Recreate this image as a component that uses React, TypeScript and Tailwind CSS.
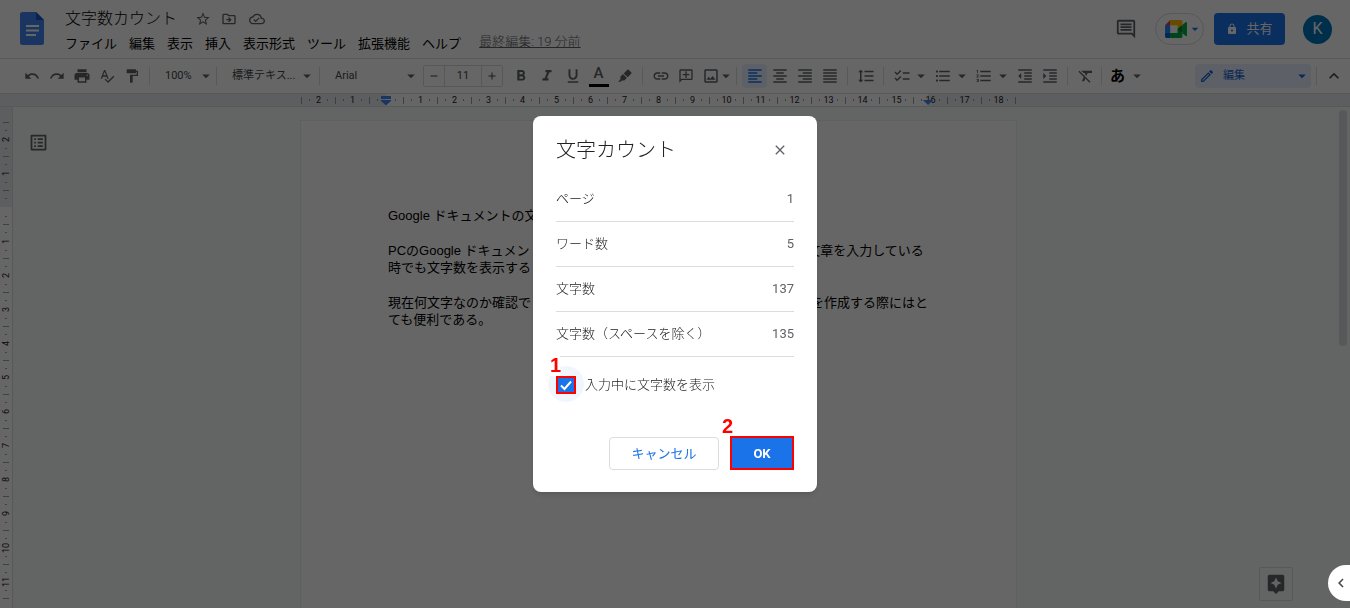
import React, { useState } from "react";
import clsx from "clsx";
import {
    MdStarBorder,
    MdOutlineDriveFileMove,
    MdOutlineCloudDone,
    MdUndo,
    MdRedo,
    MdPrint,
    MdSpellcheck,
    MdFormatPaint,
    MdArrowDropDown,
    MdRemove,
    MdAdd,
    MdFormatBold,
    MdFormatItalic,
    MdFormatUnderlined,
    MdLink,
    MdOutlineAddComment,
    MdOutlineImage,
    MdFormatAlignLeft,
    MdFormatAlignCenter,
    MdFormatAlignRight,
    MdFormatAlignJustify,
    MdFormatLineSpacing,
    MdChecklist,
    MdFormatListBulleted,
    MdFormatListNumbered,
    MdFormatIndentDecrease,
    MdFormatIndentIncrease,
    MdFormatClear,
    MdOutlineEdit,
    MdExpandLess,
    MdOutlineComment,
    MdLock,
    MdOutlineListAlt,
    MdAssistant,
    MdChevronLeft,
    MdClose,
} from "react-icons/md";

const menus = ["ファイル", "編集", "表示", "挿入", "表示形式", "ツール", "拡張機能", "ヘルプ"];

const counts = [
    { label: "ページ", value: 1 },
    { label: "ワード数", value: 5 },
    { label: "文字数", value: 137 },
    { label: "文字数（スペースを除く）", value: 135 },
];

// centimetres, negative values are the margins
const horizontalMarks = Array.from({ length: 21 }, (_, i) => i - 2);
const verticalMarks = Array.from({ length: 14 }, (_, i) => i - 2);

const DocsLogo = () => (
    <svg className="w-6 h-[33px]" viewBox="0 0 24 33">
        <path fill="#4285f4" d="M2.5 0H16l8 8v22.5a2.5 2.5 0 0 1-2.5 2.5h-19A2.5 2.5 0 0 1 0 30.500V2.500A2.500 2.500 0 0 1 2.500 0z" />
        <path fill="#1a56c4" d="M16 0l8 8h-8z" />
        <path fill="#fff" d="M6 13h13v2H6zM6 17.500h13v2H6zM6 22h10v2H6z" />
    </svg>
);

const MeetLogo = () => (
    <svg className="w-[22px] h-[18px] shrink-0" viewBox="0 0 87.5 72">
        <path fill="#00832d" d="M49.5 36l8.53 9.75 11.47 7.33 2-17.02-2-16.64-11.69 6.44z" />
        <path fill="#0066da" d="M0 51.5V66c0 3.315 2.685 6 6 6h14.5l3-10.96-3-9.54-9.95-3z" />
        <path fill="#e94235" d="M20.5 0L0 20.5l10.55 3 9.95-3 2.95-9.41z" />
        <path fill="#2684fc" d="M20.5 20.5H0v31h20.5z" />
        <path fill="#00ac47" d="M82.6 8.68L69.5 19.42v33.66l13.16 10.79c1.97 1.54 4.85.135 4.85-2.37V11c0-2.535-2.945-3.925-4.91-2.32zM49.5 36v15.5h-29V72h43c3.315 0 6-2.685 6-6V53.08z" />
        <path fill="#ffba00" d="M63.5 0h-43v20.5h29V36l20-16.57V6c0-3.315-2.685-6-6-6z" />
    </svg>
);

const Highlighter = () => (
    <svg className="w-4 h-4" viewBox="0 0 16 16" fill="currentColor">
        <path d="M10.300 1.800a1 1 0 0 1 1.400 0l2.500 2.500a1 1 0 0 1 0 1.400L10.600 9.300 6.700 5.400z" />
        <path d="M6 6.100l3.900 3.900-2.600 2.600H4.800L3.700 13.700H1.200l2.200-2.400V8.700z" />
    </svg>
);

type ToolProps = {
    label: string;
    active?: boolean;
    children: React.ReactNode;
};

const Tool = ({ label, active, children }: ToolProps) => (
    <button
        aria-label={label}
        className={clsx(
            "w-[25px] h-6 shrink-0 flex items-center justify-center rounded-sm",
            active ? "bg-[#e8f0fe] text-[#1a73e8]" : "text-[#5f6368]"
        )}
    >
        {children}
    </button>
);

const Caret = ({ label }: { label: string }) => (
    <button aria-label={label} className="w-3.5 h-6 shrink-0 flex items-center justify-center text-[#5f6368]">
        <MdArrowDropDown className="w-[18px] h-[18px] shrink-0" />
    </button>
);

const Separator = () => <div className="w-px h-[18px] mx-[5px] shrink-0 bg-[#dadce0]" />;

const Header = () => (
    <header className="h-[58px] flex items-start bg-white pl-5 pr-[18px]">
        <a href="#home" aria-label="ドキュメント ホーム" className="mt-3 shrink-0">
            <DocsLogo />
        </a>
        <div className="ml-[21px] flex flex-col">
            <div className="flex items-center h-[38px] text-[#5f6368]">
                <h1 className="text-base font-light text-black">文字数カウント</h1>
                <button aria-label="スター" className="ml-[18px]"><MdStarBorder className="w-4 h-4" /></button>
                <button aria-label="移動" className="ml-2.5"><MdOutlineDriveFileMove className="w-4 h-4" /></button>
                <button aria-label="保存状況" className="ml-3"><MdOutlineCloudDone className="w-4 h-4" /></button>
            </div>
            <nav className="flex items-center h-3 gap-3 text-[13px] text-black whitespace-nowrap">
                {menus.map((menu) => (
                    <button key={menu}>{menu}</button>
                ))}
                <a href="#history" className="ml-1.5 -mt-1 font-light text-[#5f6368] underline">最終編集: 19 分前</a>
            </nav>
        </div>
        <div className="ml-auto mt-[13px] flex items-center">
            <button aria-label="コメント履歴" className="text-[#5f6368]"><MdOutlineComment className="w-[22px] h-[22px]" /></button>
            <button aria-label="ビデオ会議" className="ml-[18px] w-[49px] h-8 flex items-center justify-center rounded-full border border-[#dadce0] text-[#1a73e8]">
                <MeetLogo />
                <MdArrowDropDown className="w-4 h-4 -mr-2" />
            </button>
            <button className="ml-2.5 w-[71px] h-8 flex items-center justify-center gap-2 rounded bg-[#1a73e8] text-white text-[13px]">
                <MdLock className="w-3 h-3" />
                共有
            </button>
            <button aria-label="アカウント" className="ml-[18px] w-[29px] h-[29px] rounded-full bg-[#0277bd] text-white text-base">K</button>
        </div>
    </header>
);

const Toolbar = () => (
    <div className="h-9 shrink-0 flex items-center border-y border-[#dadce0] bg-white pl-[19px] pr-1 text-[11px] text-[#444746]">
        <Tool label="元に戻す"><MdUndo className="w-4 h-4" /></Tool>
        <Tool label="やり直し"><MdRedo className="w-4 h-4" /></Tool>
        <Tool label="印刷"><MdPrint className="w-[18px] h-[18px]" /></Tool>
        <Tool label="スペルチェック"><MdSpellcheck className="w-4 h-4" /></Tool>
        <Tool label="書式を貼り付け"><MdFormatPaint className="w-4 h-4" /></Tool>
        <Separator />
        <button className="w-14 pl-2.5 shrink-0 flex items-center justify-between">
            100%
            <MdArrowDropDown className="w-[18px] h-[18px] -mr-1 shrink-0 text-[#5f6368]" />
        </button>
        <Separator />
        <button className="w-[92px] pl-2.5 shrink-0 flex items-center justify-between whitespace-nowrap">
            標準テキス...
            <MdArrowDropDown className="w-[18px] h-[18px] -mr-0.5 shrink-0 text-[#5f6368]" />
        </button>
        <Separator />
        <button className="w-[93px] pl-2.5 shrink-0 flex items-center justify-between">
            Arial
            <MdArrowDropDown className="w-[18px] h-[18px] -mr-0.5 shrink-0 text-[#5f6368]" />
        </button>
        <div className="mx-[5px] w-20 h-[22px] shrink-0 flex items-stretch border border-[#dadce0] rounded-xs">
            <button aria-label="フォントサイズを縮小" className="w-5 shrink-0 flex items-center justify-center"><MdRemove className="w-3 h-3" /></button>
            <input
                aria-label="フォントサイズ"
                defaultValue="11"
                className="min-w-0 flex-1 border-x border-[#dadce0] text-center"
            />
            <button aria-label="フォントサイズを拡大" className="w-5 shrink-0 flex items-center justify-center"><MdAdd className="w-3 h-3" /></button>
        </div>
        <div className="flex gap-px">
            <Tool label="太字"><MdFormatBold className="w-[18px] h-[18px]" /></Tool>
            <Tool label="斜体"><MdFormatItalic className="w-[18px] h-[18px]" /></Tool>
            <Tool label="下線"><MdFormatUnderlined className="w-[18px] h-[18px]" /></Tool>
            <Tool label="テキストの色">
                <span className="w-5 h-[22px] border-b-3 border-black text-[15px] leading-4 font-medium">A</span>
            </Tool>
            <Tool label="ハイライトの色"><Highlighter /></Tool>
        </div>
        <Separator />
        <Tool label="リンクを挿入"><MdLink className="w-[18px] h-[18px]" /></Tool>
        <Tool label="コメントを追加"><MdOutlineAddComment className="w-4 h-4 -scale-x-100" /></Tool>
        <Tool label="画像を挿入"><MdOutlineImage className="w-[18px] h-[18px]" /></Tool>
        <div className="-ml-1 -mr-0.5">
            <Caret label="画像オプション" />
        </div>
        <Separator />
        <Tool label="左揃え" active><MdFormatAlignLeft className="w-[18px] h-[18px]" /></Tool>
        <Tool label="中央揃え"><MdFormatAlignCenter className="w-[18px] h-[18px]" /></Tool>
        <Tool label="右揃え"><MdFormatAlignRight className="w-[18px] h-[18px]" /></Tool>
        <Tool label="両端揃え"><MdFormatAlignJustify className="w-[18px] h-[18px]" /></Tool>
        <Separator />
        <Tool label="行間隔"><MdFormatLineSpacing className="w-[18px] h-[18px]" /></Tool>
        <Separator />
        <div className="flex gap-0.5">
            <div className="flex">
                <Tool label="チェックリスト"><MdChecklist className="w-[18px] h-[18px]" /></Tool>
                <Caret label="チェックリストのメニュー" />
            </div>
            <div className="flex">
                <Tool label="箇条書き"><MdFormatListBulleted className="w-[18px] h-[18px]" /></Tool>
                <Caret label="箇条書きのメニュー" />
            </div>
            <div className="flex">
                <Tool label="番号付きリスト"><MdFormatListNumbered className="w-[18px] h-[18px]" /></Tool>
                <Caret label="番号付きリストのメニュー" />
            </div>
            <div className="flex">
                <Tool label="インデント減"><MdFormatIndentDecrease className="w-[18px] h-[18px]" /></Tool>
                <Tool label="インデント増"><MdFormatIndentIncrease className="w-[18px] h-[18px]" /></Tool>
            </div>
        </div>
        <Separator />
        <Tool label="書式をクリア"><MdFormatClear className="w-[18px] h-[18px]" /></Tool>
        <div className="-mx-0.5">
            <Separator />
        </div>
        <Tool label="入力ツール"><span className="text-[15px] leading-4 font-bold text-black">あ</span></Tool>
        <Caret label="入力ツールのメニュー" />
        <button className="ml-auto w-[116px] h-6 shrink-0 flex items-center gap-2 rounded bg-[#e8f0fe] pl-1 text-[#1967d2]">
            <MdOutlineEdit className="w-4 h-4" />
            編集
            <MdArrowDropDown className="ml-auto w-[18px] h-[18px]" />
        </button>
        <Separator />
        <button aria-label="メニューを非表示" className="w-6 flex justify-center"><MdExpandLess className="w-5 h-5" /></button>
    </div>
);

const HorizontalRuler = () => (
    <div className="h-[13px] shrink-0 flex justify-center border-b border-[#dadce0] bg-[#e8eaed] pl-[13px] pr-[46px] text-[9px] text-[#202124]">
        <div className="relative w-[715px] h-3 flex shrink-0">
            <div className="absolute inset-y-0 left-[85px] right-[88px] bg-white" />
            {horizontalMarks.map((mark) => (
                <div key={mark} className="relative w-[34px] flex items-center">
                    <span className="w-px h-[7px] bg-[#9aa0a6]" />
                    <span className="ml-[7px] w-px h-0.5 bg-[#9aa0a6]" />
                    <span className="flex-1 text-center leading-3">
                        {mark !== 0 && Math.abs(mark)}
                    </span>
                    <span className="mr-[7px] w-px h-0.5 bg-[#9aa0a6]" />
                    {mark === 0 && (
                        <svg className="absolute left-3 top-0.5 w-2.5 h-2.5" viewBox="0 0 10 10" fill="#4285f4">
                            <path d="M0 0h10v3H0zM0 4h10v1L5 9.500 0 5z" />
                        </svg>
                    )}
                    {mark === 16 && (
                        <svg className="absolute left-2.5 top-1.5 w-2.5 h-[5px]" viewBox="0 0 10 5" fill="#4285f4">
                            <path d="M0 0h10L5 5z" />
                        </svg>
                    )}
                </div>
            ))}
            <span className="w-px h-[7px] self-center bg-[#9aa0a6]" />
        </div>
    </div>
);

const VerticalRuler = () => (
    <div className="w-[13px] shrink-0 flex flex-col items-stretch border-r border-[#dadce0] bg-white text-[9px] text-[#202124]">
        <div className="h-[15px] shrink-0 bg-[#e8eaed]" />
        {verticalMarks.map((mark) => (
            <div
                key={mark}
                className={clsx(
                    "h-[34px] shrink-0 flex flex-col items-center",
                    mark < 0 && "bg-[#e8eaed]",
                    mark === 0 && "bg-linear-to-b from-[#e8eaed] from-50% to-white to-50%"
                )}
            >
                <span className="h-px w-1.5 shrink-0 bg-[#9aa0a6]" />
                <span className="mt-[7px] h-px w-0.5 shrink-0 bg-[#9aa0a6]" />
                <span className="flex-1 flex items-center justify-center leading-3 rotate-180 [writing-mode:vertical-rl]">
                    {mark !== 0 && Math.abs(mark)}
                </span>
                <span className="mb-[7px] h-px w-0.5 shrink-0 bg-[#9aa0a6]" />
            </div>
        ))}
        <span className="h-px w-1.5 self-center bg-[#9aa0a6]" />
    </div>
);

const Page = () => (
    <article className="w-[717px] shrink-0 mt-[13px] border border-b-0 border-[#eceeef] bg-white pl-[87px] pt-[86px] text-[13px] leading-[17px] text-black whitespace-nowrap font-['Liberation_Sans','Noto_Sans_CJK_JP',sans-serif] flex flex-col gap-[18px]">
        <p>Google ドキュメントの文字数カウント機能</p>
        <p>
            PCのGoogle ドキュメントの文字カウント機能を使うと、PCの画面上で文章を入力している
            <br />
            時でも文字数を表示することができる。
        </p>
        <p>
            現在何文字なのか確認できるので、文字数に制限のある Web サイト記事を作成する際にはと
            <br />
            ても便利である。
        </p>
    </article>
);

const WordCountDialog = () => {
    const [showCount, setShowCount] = useState(true);

    return (
        <div className="fixed inset-0 flex items-center justify-center bg-black/60">
            <div role="dialog" aria-labelledby="dialog-title" className="w-[284px] rounded-lg bg-white px-[23px] pt-[18px] pb-[22px] shadow-md text-[13px] text-[#202124]">
                <div className="flex items-center justify-between h-8">
                    <h2 id="dialog-title" className="text-xl font-light">文字カウント</h2>
                    <button aria-label="閉じる" className="mr-1.5 text-[#5f6368]"><MdClose className="w-4 h-4" /></button>
                </div>

                <dl className="mt-[11px]">
                    {counts.map((count) => (
                        <div key={count.label} className="h-[45px] flex items-center justify-between border-b border-[#dadce0]">
                            <dt className="font-light">{count.label}</dt>
                            <dd className="text-[#5f6368]">{count.value}</dd>
                        </div>
                    ))}
                </dl>

                <div className="relative mt-[18px] flex">
                    <span className="absolute -left-2 -top-[9px] w-9 h-9 rounded-full bg-[#f1f6fe]" />
                    <span className="absolute -left-1.5 -top-5 w-2.5 pb-px bg-white text-xl leading-5 font-bold text-[#ff0000] font-['Liberation_Sans',sans-serif]">1</span>
                    <label className="relative flex items-center gap-[9px] font-light">
                        <span className="relative w-5 h-[18px] flex">
                            <input
                                type="checkbox"
                                checked={showCount}
                                onChange={(e) => setShowCount(e.target.checked)}
                                className="peer w-5 h-[18px] appearance-none border-2 border-[#ff0000] bg-white checked:bg-[#1a73e8]"
                            />
                            <svg className="absolute inset-0 w-5 h-[18px] hidden peer-checked:block pointer-events-none" viewBox="0 0 20 18" fill="none" stroke="#fff" strokeWidth="2">
                                <path d="M5 9.500l3.500 3.500L15 5.500" />
                            </svg>
                        </span>
                        入力中に文字数を表示
                    </label>
                </div>

                <div className="relative mt-[42px] flex items-center justify-end gap-[11px]">
                    <button className="w-[110px] h-[33px] rounded border border-[#dadce0] text-[#1a73e8]">キャンセル</button>
                    <span className="absolute right-[61px] -top-5 text-xl leading-5 font-bold text-[#ff0000] font-['Liberation_Sans',sans-serif]">2</span>
                    <button className="w-16 h-[34px] border-2 border-[#ff0000] bg-[#1a73e8] font-bold text-white">OK</button>
                </div>
            </div>
        </div>
    );
};

const App = () => {
    return (
        <div className="h-screen flex flex-col overflow-hidden bg-[#f7fbf9] font-[Roboto,'Noto_Sans_CJK_JP',sans-serif]">
            <Header />
            <Toolbar />
            <HorizontalRuler />
            <main className="relative flex-1 min-h-0 flex">
                <VerticalRuler />
                <div className="relative flex-1 min-w-0 flex justify-center">
                    <button aria-label="ドキュメントの概要を表示" className="absolute left-[15px] top-[25px] text-[#5f6368]">
                        <MdOutlineListAlt className="w-[21px] h-[21px]" />
                    </button>
                    <Page />
                </div>
                <div className="w-[46px] shrink-0 flex justify-end pt-[3px] pr-[3px]">
                    <div className="w-2 h-[236px] rounded-full bg-[#dadce0]" />
                </div>
                <button aria-label="データ探索" className="absolute right-[57px] bottom-[7px] w-[34px] h-[34px] flex items-center justify-center rounded-xs border border-[#dadce0] text-[#5f6368]">
                    <MdAssistant className="w-[22px] h-[22px]" />
                </button>
            </main>

            <WordCountDialog />

            {/* side panel handle stays above the backdrop */}
            <button aria-label="サイドパネルを表示" className="fixed right-0 bottom-[7px] w-[22px] h-9 flex items-center justify-center rounded-l-full bg-white pl-1 text-[#444746]">
                <MdChevronLeft className="w-[18px] h-[18px]" />
            </button>
        </div>
    );
};

export default App;
